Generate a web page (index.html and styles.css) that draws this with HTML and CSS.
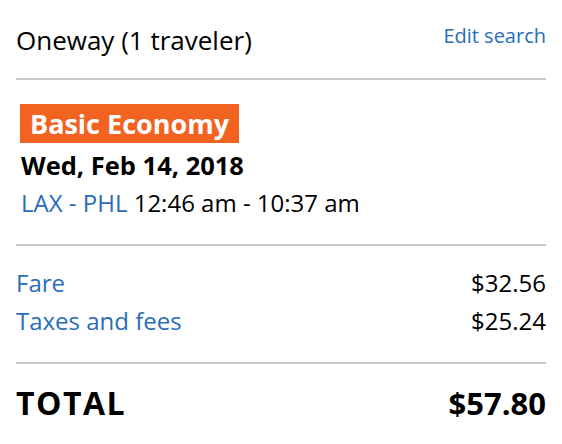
FILE: index.html
```html
<!DOCTYPE html>
<html lang="en">
<head>
<meta charset="utf-8">
<title>Trip summary</title>
<link rel="stylesheet" href="styles.css">
</head>
<body>
<div class="summary">
  <div class="header">
    <div class="trip-type">Oneway (1 traveler)</div>
    <a class="edit-link" href="#">Edit search</a>
  </div>
  <div class="divider"></div>
  <div class="flight">
    <div class="badge">Basic Economy</div>
    <div class="date">Wed, Feb 14, 2018</div>
    <div class="route"><span class="airports">LAX - PHL</span> 12:46 am - 10:37 am</div>
  </div>
  <div class="divider divider-flight"></div>
  <div class="charges">
    <div class="charge-row"><span class="charge-label">Fare</span><span class="charge-value">$32.56</span></div>
    <div class="charge-row"><span class="charge-label">Taxes and fees</span><span class="charge-value">$25.24</span></div>
  </div>
  <div class="divider divider-charges"></div>
  <div class="total-row">
    <span class="total-label">TOTAL</span>
    <span class="total-value">$57.80</span>
  </div>
</div>
</body>
</html>
```

FILE: styles.css
```css
html, body {
  margin: 0;
  padding: 0;
  background: #fff;
}

body {
  font-family: "Open Sans", "Liberation Sans", sans-serif;
  color: #000;
}

.summary {
  padding: 22px 16px 0 16px;
}

.header {
  display: flex;
  justify-content: space-between;
  align-items: flex-start;
}

.trip-type {
  font-size: 26px;
  line-height: 36px;
}

.edit-link {
  font-size: 20px;
  line-height: 28px;
  color: #2a6cb8;
  text-decoration: none;
}

.divider {
  height: 2px;
  background: #cccccc;
  margin-top: 20px;
}

.flight {
  padding-left: 4px;
  margin-top: 24px;
}

.badge {
  display: inline-block;
  background: #f26322;
  color: #fff;
  font-weight: 700;
  font-size: 27px;
  line-height: 39px;
  padding: 0 10px;
}

.date {
  font-weight: 700;
  font-size: 25.5px;
  line-height: 36px;
  margin-top: 4px;
  padding-left: 1px;
}

.route {
  font-size: 24px;
  line-height: 36px;
  margin-top: 2px;
  padding-left: 1px;
}

.airports {
  color: #2a6cb8;
}

.divider-flight {
  margin-top: 23px;
}

.charges {
  margin-top: 18px;
}

.charge-row {
  display: flex;
  justify-content: space-between;
  font-size: 24px;
  line-height: 38px;
}

.charge-label {
  color: #2a6cb8;
}

.divider-charges {
  margin-top: 22px;
}

.total-row {
  display: flex;
  justify-content: space-between;
  align-items: baseline;
  font-weight: 700;
  line-height: 44px;
  margin-top: 17px;
}

.total-label {
  font-size: 32px;
  letter-spacing: 1.5px;
}

.total-value {
  font-size: 31px;
}
```
